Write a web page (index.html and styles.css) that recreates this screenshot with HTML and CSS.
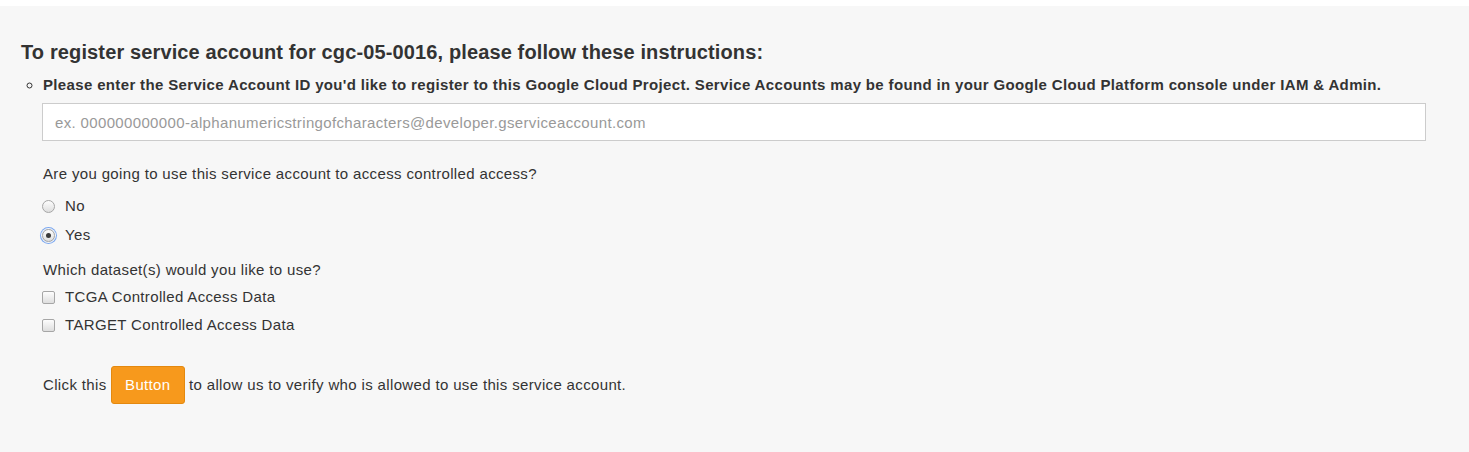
FILE: index.html
```html
<!DOCTYPE html>
<html>
<head>
<meta charset="utf-8">
<link rel="stylesheet" href="styles.css">
</head>
<body>
<div class="panel">
  <h3 class="title">To register service account for cgc-05-0016, please follow these instructions:</h3>
  <ul class="steps">
    <li class="step">
      <div class="step-title">Please enter the Service Account ID you'd like to register to this Google Cloud Project. Service Accounts may be found in your Google Cloud Platform console under IAM &amp; Admin.</div>
      <input class="field" type="text" placeholder="ex. 000000000000-alphanumericstringofcharacters@developer.gserviceaccount.com">
      <p class="question">Are you going to use this service account to access controlled access?</p>
      <label class="choice choice-first"><input class="radio" type="radio" name="ca"> <span>No</span></label>
      <label class="choice choice-second"><input class="radio radio-focus" type="radio" name="ca" checked> <span>Yes</span></label>
      <p class="question question-ds">Which dataset(s) would you like to use?</p>
      <label class="choice choice-cb1"><input class="check" type="checkbox"> <span>TCGA Controlled Access Data</span></label>
      <label class="choice choice-cb2"><input class="check" type="checkbox"> <span>TARGET Controlled Access Data</span></label>
      <p class="verify">Click this <button class="btn" type="button">Button</button> to allow us to verify who is allowed to use this service account.</p>
    </li>
  </ul>
</div>
</body>
</html>
```
FILE: styles.css
```css
html, body {
  margin: 0;
  padding: 0;
  background: #ffffff;
}
body {
  font-family: "Liberation Sans", Arial, sans-serif;
  font-size: 15px;
  letter-spacing: 0.35px;
  line-height: 20px;
  color: #333333;
}
.panel {
  margin-top: 6px;
  background: #f7f7f7;
  min-height: 446px;
  box-sizing: border-box;
  padding: 35px 43px 0 21px;
}
.title {
  margin: 0 0 12px 0;
  font-size: 20px;
  letter-spacing: 0.13px;
  line-height: 22px;
  font-weight: bold;
  color: #333333;
}
.steps {
  margin: 0;
  padding-left: 22px;
  list-style: circle;
}
.step-title {
  font-weight: bold;
}
.field {
  display: block;
  box-sizing: border-box;
  width: calc(100% + 1px);
  margin: 8px 0 0 -1px;
  height: 38px;
  padding: 0 12px;
  border: 1px solid #cccccc;
  border-radius: 0;
  background: #ffffff;
  font-family: "Liberation Sans", Arial, sans-serif;
  font-size: 15px;
  letter-spacing: 0.35px;
  color: #555555;
  outline: none;
}
.field::placeholder {
  color: #999999;
}
.question {
  margin: 23px 0 0 0;
}
.question-ds {
  margin-top: 15px;
}
.choice {
  display: flex;
  align-items: center;
  gap: 10px;
  height: 20px;
  margin-left: -1px;
}
.choice-first { margin-top: 12px; }
.choice-second { margin-top: 9px; }
.choice-cb1 { margin-top: 7px; }
.choice-cb2 { margin-top: 8px; }
.radio, .check {
  -webkit-appearance: none;
  appearance: none;
  margin: 0;
  width: 13px;
  height: 13px;
  box-sizing: border-box;
  border: 1px solid #a6a6a6;
  background: linear-gradient(#fdfdfd, #dedede);
  flex: none;
  position: relative;
}
.radio {
  border-radius: 50%;
}
.radio:checked::after {
  content: "";
  position: absolute;
  left: 3px;
  top: 3px;
  width: 5px;
  height: 5px;
  border-radius: 50%;
  background: #3a3a3a;
}
.radio-focus {
  box-shadow: 0 0 0 1px #f7f7f7, 0 0 0 2px #7aa7f0;
}
.check {
  border-radius: 2px;
}
.verify {
  margin: 31px 0 0 0;
  line-height: 38px;
}
.btn {
  display: inline-block;
  vertical-align: top;
  height: 38px;
  padding: 0 13px;
  border: 1px solid #e4890f;
  border-radius: 3px;
  background: #f7991c;
  color: #ffffff;
  font-family: "Liberation Sans", Arial, sans-serif;
  font-size: 15px;
  letter-spacing: 0.35px;
  line-height: 36px;
}
```
